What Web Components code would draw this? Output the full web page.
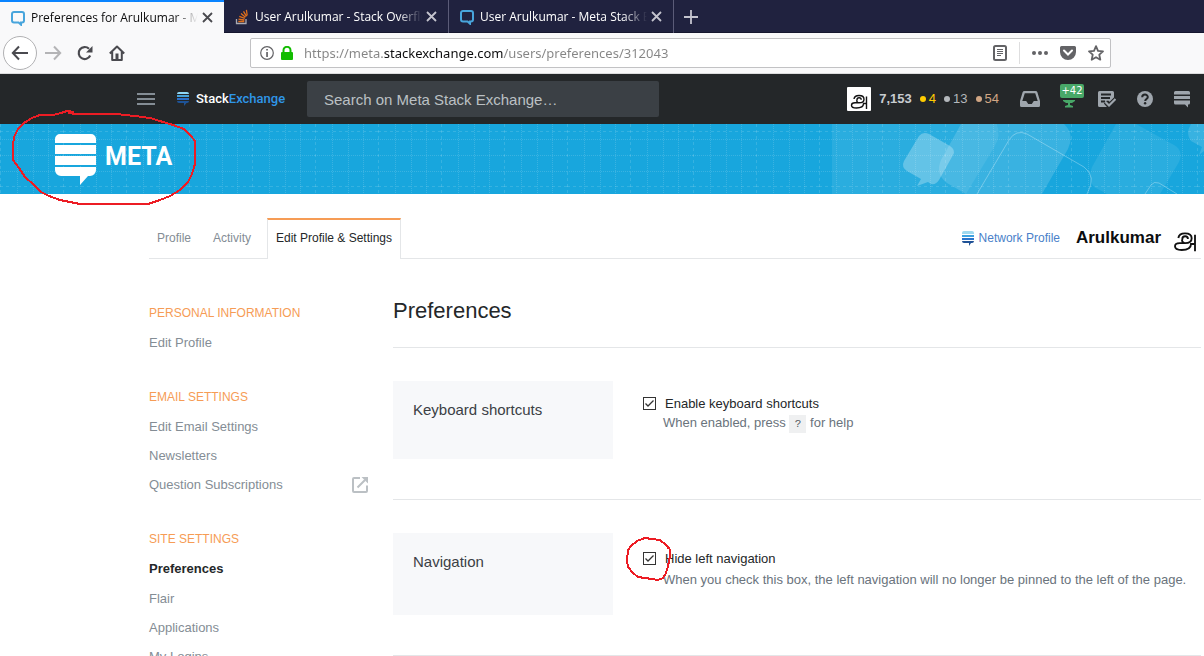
<!DOCTYPE html>
<html lang="en">
<head>
<meta charset="utf-8">
<title>Preferences for Arulkumar - Meta Stack Exchange</title>
<style>
  html, body { margin: 0; height: 100%; }
  body { overflow: hidden; background: #fff; color: #242729; font: 13px/18px "Liberation Sans", Arial, sans-serif; }
</style>
</head>
<body>
<app-window></app-window>
<script>
const define = (name, html) => {
  const template = document.createElement('template');
  template.innerHTML = `<style>
    *, *::before, *::after { box-sizing: border-box; }
    button { border: 0; margin: 0; padding: 0; background: none; color: inherit; font: inherit; cursor: pointer; }
    a { color: inherit; text-decoration: none; }
    svg { display: block; flex: none; }
    [hidden] { display: none; }
  </style>` + html;
  customElements.define(name, class extends HTMLElement {
    constructor() {
      super();
      this.attachShadow({ mode: 'open' }).append(template.content.cloneNode(true));
    }
  });
};

/* ---------- browser chrome ---------- */
define('browser-tab', `<style>
  :host { display: flex; align-items: center; box-sizing: border-box; width: 225px; height: 33px; padding: 0 8px 0 10px; border-right: 1px solid #5b5c78; color: #fff; font: 12px/18px "Open Sans", "Noto Sans", sans-serif; --x: #c4c4ce; }
  :host([active]) { background: #f9f9fa; color: #0c0c0d; border-top: 2px solid #0a84ff; border-right: 0; width: 224px; --x: #4a4a4f; }
  .title { flex: 1; min-width: 0; margin: 0 0 0 5px; text-align: left; white-space: nowrap; overflow: hidden; mask-image: linear-gradient(to left, transparent, #000 24px); }
  .close { color: var(--x); width: 18px; height: 18px; display: grid; place-items: center; }
</style>
<slot name="icon"></slot>
<button class="title" role="tab"><slot></slot></button>
<button class="close" aria-label="Close tab"><svg width="11" height="11" viewBox="0 0 11 11"><path d="M1 1l9 9M10 1l-9 9" stroke="currentColor" stroke-width="1.8"/></svg></button>`);

define('meta-favicon', `<style>:host { display: block; }</style>
<svg width="16" height="16" viewBox="0 0 16 16"><path d="M4 1.9h8a2 2 0 0 1 2 2v6.6a2 2 0 0 1-2 2h-1v2.2l-2.400-2.200H4a2 2 0 0 1-2-2V3.900a2 2 0 0 1 2-2z" fill="none" stroke="#48a5dc" stroke-width="2"/></svg>`);

define('overflow-favicon', `<style>:host { display: block; }</style>
<svg width="16" height="16" viewBox="0 0 16 16" fill="none"><path d="M2.500 10v4.500h9.500V10" stroke="#a9aab4" stroke-width="1.300"/><path d="M4.300 12.500h6M4.500 10.100l5.900.9M5.300 7.400l5.500 2M7 4.600l4.500 3.700M9.500 2.300l3 5M12.400.8l.8 5.700" stroke="#e0701c" stroke-width="1.300"/></svg>`);

define('tab-strip', `<style>
  :host { display: flex; align-items: flex-start; height: 33px; background: #20223f; color: #c4c4ce; box-shadow: inset 0 -1px #15162e; }
  .new { width: 34px; height: 33px; display: grid; place-items: center; }
</style>
<browser-tab active><meta-favicon slot="icon"></meta-favicon>Preferences for Arulkumar - Me</browser-tab>
<browser-tab><overflow-favicon slot="icon"></overflow-favicon>User Arulkumar - Stack Overflo</browser-tab>
<browser-tab><meta-favicon slot="icon"></meta-favicon>User Arulkumar - Meta Stack Ex</browser-tab>
<button class="new" aria-label="New tab"><svg width="14" height="14" viewBox="0 0 14 14"><path d="M7 0v14M0 7h14" stroke="currentColor" stroke-width="1.800"/></svg></button>`);

define('nav-bar', `<style>
  :host { display: flex; align-items: center; box-sizing: border-box; height: 41px; background: #f9f9fa; border-bottom: 1px solid #dcdcdd; padding: 0 93px 1px 3px; color: #4a4a4f; }
  .buttons { display: flex; align-items: center; width: 247px; }
  .buttons button { width: 32px; height: 34px; display: grid; place-items: center; }
  .buttons .back { width: 34px; border: 1px solid #b1b1b3; border-radius: 50%; background: #fff; }
  .buttons .forward { color: #b4b4b6; }
  .field { flex: 1; min-width: 0; height: 30px; display: flex; align-items: center; border: 1px solid #c2c2c4; border-radius: 2px; background: #fff; padding: 0 6px 0 9px; color: #636366; }
  .lock { margin: 0 10px 0 6px; }
  input { flex: 1; min-width: 0; border: 0; outline: 0; padding: 0; height: 28px; font: 13px/28px "Noto Sans", "Open Sans", sans-serif;
    background: linear-gradient(90deg, #858585 80px, #0c0c0d 80px, #0c0c0d 199px, #858585 199px); -webkit-background-clip: text; background-clip: text; -webkit-text-fill-color: transparent; }
  .actions { display: flex; align-items: center; gap: 12px; }
  .rule { width: 1px; height: 22px; background: #dededf; }
</style>
<div class="buttons">
  <button class="back" aria-label="Back"><svg width="18" height="16" viewBox="0 0 18 16"><path d="M17 8H2M8 1.500L1.800 8 8 14.500" fill="none" stroke="currentColor" stroke-width="2"/></svg></button>
  <button class="forward" aria-label="Forward"><svg width="18" height="16" viewBox="0 0 18 16"><path d="M1 8h15M10 1.500L16.200 8 10 14.500" fill="none" stroke="currentColor" stroke-width="2"/></svg></button>
  <button aria-label="Reload"><svg width="16" height="16" viewBox="0 0 16 16"><path d="M13.200 10.500A6 6 0 1 1 12 3.800" fill="none" stroke="currentColor" stroke-width="2.200"/><path d="M15.500 1v6.500H9z" fill="currentColor"/></svg></button>
  <button aria-label="Home"><svg width="16" height="16" viewBox="0 0 16 16"><path d="M.8 8.500L8 1.500l7.200 7M3.200 7v8h9.600V7" fill="none" stroke="currentColor" stroke-width="2" stroke-linejoin="round"/><path d="M6.500 8.500h3V15h-3z" fill="currentColor"/></svg></button>
</div>
<div class="field">
  <svg width="14" height="14" viewBox="0 0 14 14"><circle cx="7" cy="7" r="6.300" fill="none" stroke="currentColor" stroke-width="1.200"/><path d="M6.200 3h1.700v1.600H6.200zM6.200 6h1.700v5H6.200z" fill="currentColor"/></svg>
  <svg class="lock" width="14" height="14" viewBox="0 0 14 14"><path d="M3.500 7V4.300a3.500 3.500 0 0 1 7 0V7" fill="none" stroke="#12bc00" stroke-width="2"/><rect x="1" y="6" width="12" height="8" rx="1" fill="#12bc00"/></svg>
  <input aria-label="Address" value="https://meta.stackexchange.com/users/preferences/312043">
  <div class="actions">
    <svg width="14" height="16" viewBox="0 0 14 16"><rect x="1" y="1" width="12" height="14" rx="1.500" fill="none" stroke="currentColor" stroke-width="2"/><path d="M4 4.500h6M4 6.500h6M4 8.500h6M4 10.500h4" stroke="currentColor"/></svg>
    <span class="rule"></span>
    <svg width="16" height="16" viewBox="0 0 16 16" fill="currentColor"><circle cx="2" cy="8" r="2"/><circle cx="8" cy="8" r="2"/><circle cx="14" cy="8" r="2"/></svg>
    <svg width="16" height="16" viewBox="0 0 16 16"><path d="M1.500 1h13A1.500 1.500 0 0 1 16 2.500V7A8 8 0 0 1 0 7V2.500A1.500 1.500 0 0 1 1.500 1z" fill="currentColor"/><path d="M4 5.500l4 4 4-4" fill="none" stroke="#fff" stroke-width="2" stroke-linecap="round"/></svg>
    <svg width="16" height="16" viewBox="0 0 16 16"><path d="M8 1.200l2 4.600 5 .5-3.700 3.400 1 5L8 12.200l-4.300 2.500 1-5L1 6.300l5-.5z" fill="none" stroke="currentColor" stroke-width="1.800" stroke-linejoin="round"/></svg>
  </div>
</div>`);

/* ---------- site header ---------- */
define('user-avatar', `<style>
  :host { display: grid; place-items: center; width: 24px; height: 24px; background: #fff; border-radius: 1px; }
  svg { width: 100%; height: 100%; }
</style>
<svg viewBox="0 0 24 24" role="img" aria-label="Avatar"><path d="M7 12Q7.500 8.500 12 8.500Q17 8.500 17 12.200Q17 15.800 12 15.800H8Q4.500 15.800 4.500 18.200Q4.500 21 9.500 21Q16.500 21 16.500 16.500H19.500M19.500 9.500V22M14.200 12.800a2.100 2.100 0 1 0-4.200 0 2.100 2.100 0 0 0 2.100 3" fill="none" stroke="#111" stroke-width="1.400"/></svg>`);

define('top-bar', `<style>
  :host { display: flex; align-items: center; box-sizing: border-box; height: 50px; background: #242729; padding: 0 14px 0 137px; color: #9fa6ad; }
  .brand { display: flex; align-items: center; gap: 7px; margin: 0 20px 0 22px; color: #fff; font: 500 13px/20px Roboto, sans-serif; }
  .brand span { min-width: 91px; }
  .brand b { font-weight: 500; color: #2f96e8; }
  input { width: 352px; height: 36px; border: 0; border-radius: 2px; background: #3b4045; padding: 0 17px; font: 15px/20px "Liberation Sans", Arial, sans-serif; color: #d6d8db; }
  input::placeholder { color: #bbc0c4; opacity: 1; }
  .user { margin-left: auto; display: flex; align-items: center; gap: 8px; }
  .user b { color: #c8ccd0; font-size: 13px; }
  .badge { display: flex; align-items: center; gap: 3px; }
  .badge::before { content: ""; width: 6px; height: 6px; border-radius: 50%; background: currentColor; }
  .gold { color: #ffcc01; } .silver { color: #b4b8bc; } .bronze { color: #d1a684; }
  nav { display: flex; align-items: center; gap: 20px; margin-left: 21px; }
  nav button { height: 20px; display: grid; place-items: center; position: relative; }
  .points { color: #48a868; }
  .count { position: absolute; left: 0; top: -5px; width: 24px; height: 14px; border-radius: 2px; background: #48a868; color: #fff; font: 10px/14px "DejaVu Sans", sans-serif; text-align: center; }
</style>
<button aria-label="Menu"><svg width="18" height="12" viewBox="0 0 18 12"><path d="M0 1h18M0 6h18M0 11h18" stroke="#848d95" stroke-width="2"/></svg></button>
<a class="brand" href="#"><svg width="12" height="14" viewBox="0 0 12 14"><path d="M0 2a2 2 0 0 1 2-2h8a2 2 0 0 1 2 2z" fill="#8fd8f7"/><path d="M0 3h12v2H0z" fill="#46a2d9"/><path d="M0 6h12v2H0z" fill="#2b70c9"/><path d="M0 9h12a2 2 0 0 1-2 2H9.500L7 14v-3H2a2 2 0 0 1-2-2z" fill="#1e5397"/></svg><span>Stack<b>Exchange</b></span></a>
<input type="search" aria-label="Search" placeholder="Search on Meta Stack Exchange…">
<div class="user">
  <user-avatar></user-avatar><b>7,153</b><span class="badge gold">4</span><span class="badge silver">13</span><span class="badge bronze">54</span>
</div>
<nav>
  <button aria-label="Inbox"><svg width="20" height="18" viewBox="0 0 20 18"><path fill-rule="evenodd" d="M4.500 1h11a2 2 0 0 1 1.900 1.300L20 11v4.500a1.500 1.500 0 0 1-1.500 1.500h-17A1.500 1.500 0 0 1 0 15.500V11l2.600-8.700A2 2 0 0 1 4.500 1zM4.800 3.200L2.300 11h3.900l2 3h3.600l2-3h3.900l-2.500-7.800z" fill="currentColor"/></svg></button>
  <button class="points" aria-label="Achievements"><svg width="18" height="18" viewBox="0 0 18 18"><path d="M3 10h12v1l-3 2H6l-3-2zM8 12h2v3l3 1v1.500H5V16l3-1z" fill="currentColor"/></svg><span class="count">+42</span></button>
  <button aria-label="Review"><svg width="18" height="18" viewBox="0 0 18 18"><path d="M1.500 1h13A1.500 1.500 0 0 1 16 2.500V8l-4 4-2-1.500L6.500 14l2.500 3H1.500A1.500 1.500 0 0 1 0 15.500v-13A1.500 1.500 0 0 1 1.500 1z" fill="currentColor"/><path d="M3 4.500h10M3 8h9M3 11.500h4" stroke="#242729" stroke-width="1.800"/><path d="M7.500 12l3.500 3.500 6.500-6.500" fill="none" stroke="#242729" stroke-width="4.500"/><path d="M7.500 12l3.500 3.500 6.500-6.500" fill="none" stroke="currentColor" stroke-width="2.200"/></svg></button>
  <button aria-label="Help"><svg width="18" height="18" viewBox="0 0 18 18"><circle cx="9" cy="9" r="8" fill="currentColor"/><path d="M6.200 7.200C6.200 3.700 11.800 3.800 11.800 7c0 2-2.600 2-2.600 4" fill="none" stroke="#242729" stroke-width="2"/><circle cx="9.100" cy="13.300" r="1.200" fill="#242729"/></svg></button>
  <button aria-label="Sites"><svg width="16" height="18" viewBox="0 0 16 18"><path d="M0 4V2.500A1.500 1.500 0 0 1 1.500 1h13A1.500 1.500 0 0 1 16 2.500V4.500H0zM0 6h16v3H0zM0 10.500h16V13a1.500 1.500 0 0 1-1.500 1.500H14V17.500l-3-3H1.500A1.500 1.500 0 0 1 0 13z" fill="currentColor"/></svg></button>
</nav>`);

define('site-banner', `<style>
  :host { display: grid; grid-template: 70px / 1fr; background: #18a6dd; overflow: hidden; }
  :host > * { grid-area: 1 / 1; }
  svg, a { grid-area: 1 / 1; }
  .art { justify-self: end; }
  a { display: flex; align-items: center; justify-self: start; gap: 9px; padding-left: 55px; color: #fff; font: bold 25px/32px Roboto, sans-serif; }
  a span { padding-bottom: 5px; }
</style>
<svg class="art" width="372" height="70" viewBox="0 0 372 70" fill="#fff">
  <path d="M0 0H232Q243 10 236 25L210 70H0z" fill-opacity=".08"/>
  <path d="M165 0H232Q243 10 236 25L210 70H134L163 22Q169 12 165 0z" fill-opacity=".07"/>
  <path d="M129 0H165Q169 12 163 22L134 70L115 59Q103 50 109 36z" fill-opacity=".14"/>
  <path d="M97 10L118 22Q124 26 121 31L107 56Q104 61 99 60L96 58L85 62L89 55L75 47Q69 43 72 37L87 12Q91 7 97 10z" fill-opacity=".27"/>
  <path d="M284 0H304L342 21Q352 27 347 38L328 70H275L262 63Q255 55 260 43z" fill-opacity=".08"/>
  <path d="M359 0Q353 10 359 17L370 23L367 31L372 27V0z" fill-opacity=".14"/>
  <g fill="none" stroke="#fff" stroke-opacity=".3"><path d="M145 70L177 16Q184 5 195 10L252 43Q265 52 255 70M313 70L319 61Q322 57 327 59L345 70"/></g>
</svg>
<svg width="100%" height="70">
  <defs><pattern id="grid" width="63" height="70" patternUnits="userSpaceOnUse"><g fill="none" stroke="#fff">
    <path d="M.5 0v70M0 7.500h63M0 62.500h63" stroke-opacity=".13" stroke-dasharray="3 3"/>
    <path d="M17.500 0v70M33.500 0v70M48.500 0v70M0 15.500h63M0 31.500h63M0 47.500h63" stroke-opacity=".15" stroke-dasharray="1 1"/></g></pattern></defs>
  <rect width="100%" height="70" fill="url(#grid)"/>
</svg>
<a href="#"><svg width="41" height="52" viewBox="0 0 41 52" fill="#fff"><path d="M0 10V6a5 5 0 0 1 5-5h31a5 5 0 0 1 5 5v4zM0 12h41v9H0zM0 23h41v9H0zM0 34h41v3a6 6 0 0 1-6 6h-2l-8 9v-9H6a6 6 0 0 1-6-6z"/></svg><span>META</span></a>`);

/* ---------- profile page ---------- */
define('network-icon', `<style>:host { display: block; }</style>
<svg width="12" height="15" viewBox="0 0 12 15"><path d="M0 3V2a2 2 0 0 1 2-2h8a2 2 0 0 1 2 2v1z" fill="#9fd9ef"/><path d="M0 4h12v2H0z" fill="#3ea2e0"/><path d="M0 7h12v2H0z" fill="#2a74cc"/><path d="M0 10h12a2 2 0 0 1-2 2h-1L7 15v-3H2a2 2 0 0 1-2-2z" fill="#1f5196"/></svg>`);

define('profile-tabs', `<style>
  :host { display: flex; height: 41px; font-size: 12px; }
  .cell { display: flex; align-items: center; border-bottom: 1px solid #e4e6e8; color: #848d95; }
  .links { width: 118px; padding: 0 16px 0 8px; justify-content: space-between; }
  .on { width: 134px; justify-content: center; color: #242729; border: 1px solid #e4e6e8; border-top: 2px solid #f69c55; border-bottom: 0; padding-bottom: 3px; }
  .rest { flex: 1; justify-content: flex-end; gap: 16px; }
  .net { display: flex; align-items: center; gap: 5px; color: #4a7fc9; }
  b { font-size: 17px; color: #0c0d0e; }
  user-avatar { width: 32px; height: 32px; margin-left: -8px; }
</style>
<div class="cell links"><a href="#">Profile</a><a href="#">Activity</a></div>
<div class="cell on"><a href="#">Edit Profile &amp; Settings</a></div>
<div class="cell rest"><a class="net" href="#"><network-icon></network-icon>Network Profile</a><b>Arulkumar</b><user-avatar></user-avatar></div>`);

define('side-group', `<style>
  :host { display: flex; flex-direction: column; }
  h2 { margin: 0; padding-top: 1px; font-size: 12px; line-height: 30px; font-weight: 400; color: #f69c55; text-transform: uppercase; }
</style><h2><slot name="heading"></slot></h2><slot></slot>`);

define('side-link', `<style>
  :host { display: block; line-height: 29px; color: #848d95; }
  :host([current]) { line-height: 30px; font-weight: 700; color: #242729; }
  a { display: flex; align-items: center; justify-content: space-between; }
</style><a href="#"><span><slot></slot></span><slot name="icon"></slot></a>`);

define('external-icon', `<style>:host { display: block; }</style>
<svg width="18" height="18" viewBox="0 0 18 18"><path d="M9 2H3a1 1 0 0 0-1 1v12a1 1 0 0 0 1 1h12a1 1 0 0 0 1-1V9.500M6.500 11.500L14 4" fill="none" stroke="#bbc0c4" stroke-width="2"/><path d="M10.500 1H17v6.500z" fill="#bbc0c4"/></svg>`);

define('pref-row', `<style>
  :host { display: grid; grid-template-columns: 220px 1fr; column-gap: 29px; padding: 33px 0 40px; border-bottom: 1px solid #e4e6e8; }
  h2 { margin: 0; min-height: 78px; padding: 20px; background: #f7f8fa; font-size: 15px; line-height: 18px; font-weight: 400; color: #3b4045; }
</style><h2><slot name="heading"></slot></h2><div><slot></slot></div>`);

define('pref-check', `<style>
  :host { display: block; padding-top: 14px; }
  :host([roomy]) { padding: 17px 0 24px; }
  label { display: flex; align-items: center; gap: 9px; color: #242729; }
  input { appearance: none; margin: 0 0 1px 1px; width: 13px; height: 13px; border: 1px solid #333; background: #fff; background-image: url("data:image/svg+xml,%3Csvg xmlns='http://www.w3.org/2000/svg' viewBox='0 0 11 11'%3E%3Cpath d='M1.500 5.500l2.500 2.500 5.500-5.500' fill='none' stroke='%23333' stroke-width='1.300'/%3E%3C/svg%3E"); }
  p { margin: 0 0 0 21px; line-height: 20px; color: #6a737c; white-space: nowrap; }
  :host([roomy]) p { line-height: 23px; }
</style><label><input type="checkbox" checked><span><slot name="label"></slot></span></label><p><slot></slot></p>`);

define('key-cap', `<style>
  :host { display: inline-block; width: 17px; background: #eff0f1; font: 11px/18px "Liberation Mono", monospace; text-align: center; color: #535a60; }
</style><slot></slot>`);

define('preferences-page', `<style>
  :host { display: block; box-sizing: border-box; padding: 24px 3px 0 149px; }
  .columns { display: grid; grid-template-columns: 220px 1fr; column-gap: 24px; padding-top: 38px; }
  aside { display: flex; flex-direction: column; gap: 24px; }
  h1 { margin: 0; padding: 1px 0 23px; border-bottom: 1px solid #e4e6e8; font-size: 22px; line-height: 26px; font-weight: 400; color: #242729; }
</style>
<profile-tabs></profile-tabs>
<div class="columns">
  <aside>
    <side-group><span slot="heading">Personal Information</span><side-link>Edit Profile</side-link></side-group>
    <side-group><span slot="heading">Email Settings</span><side-link>Edit Email Settings</side-link><side-link>Newsletters</side-link><side-link>Question Subscriptions<external-icon slot="icon"></external-icon></side-link></side-group>
    <side-group><span slot="heading">Site Settings</span><side-link current>Preferences</side-link><side-link>Flair</side-link><side-link>Applications</side-link><side-link>My Logins</side-link></side-group>
  </aside>
  <main>
    <h1>Preferences</h1>
    <pref-row><span slot="heading">Keyboard shortcuts</span><pref-check><span slot="label">Enable keyboard shortcuts</span>When enabled, press <key-cap>?</key-cap> for help</pref-check></pref-row>
    <pref-row><span slot="heading">Navigation</span><pref-check roomy><span slot="label">Hide left navigation</span>When you check this box, the left navigation will no longer be pinned to the left of the page.</pref-check></pref-row>
  </main>
</div>`);

/* ---------- hand-drawn red markers ---------- */
define('pen-marks', `<style>
  :host { position: absolute; left: 0; top: 100px; pointer-events: none; }
</style>
<svg width="700" height="490" viewBox="0 100 700 490" fill="none" stroke="#ec1c24" stroke-width="2" stroke-linejoin="round" shape-rendering="crispEdges">
  <path d="M74 112L67 111 61 113 53 115 48 115 40 115 32 118 24 123 18 129 14 137 13 146V160L19 168 25 177 34 185 41 192 49 196 60 200 70 202 80 204H148L160 200 170 196 180 190 188 182 192 174 195 164V141L191 136 184 129 173 125 160 121 150 118 135 116 116 114H76L68 113"/>
  <path d="M669 549L666 545 660 540 652 539 645 538 637 541 631 546 628 550 627 560 628 567 633 573 638 577 645 578 652 579 658 580 663 578 666 573 668 566 670 556 670 550 667 545"/>
</svg>`);

define('app-window', `<style>
  :host { display: flex; flex-direction: column; height: 100vh; overflow: hidden; position: relative; }
  tab-strip, nav-bar, top-bar, site-banner { flex: none; }
  preferences-page { flex: 1; min-height: 0; overflow: hidden; }
</style>
<tab-strip></tab-strip>
<nav-bar></nav-bar>
<top-bar></top-bar>
<site-banner></site-banner>
<preferences-page></preferences-page>
<pen-marks></pen-marks>`);
</script>
</body>
</html>
